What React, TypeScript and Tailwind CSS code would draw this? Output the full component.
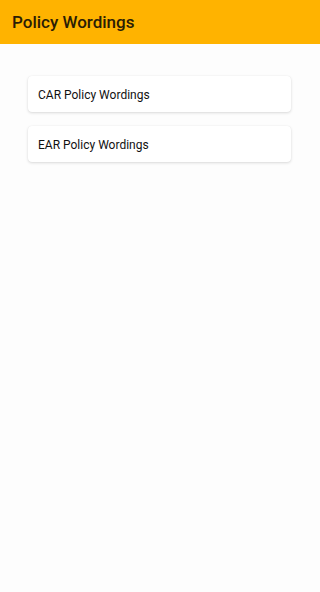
import * as React from "react";

const items = ["CAR Policy Wordings", "EAR Policy Wordings"];

export default function App() {
    return (
        <div
            className="flex flex-col h-[592px] w-[320px] bg-[#fdfdfd] overflow-hidden"
            style={{ fontFamily: "Roboto, 'Noto Sans', sans-serif" }}
        >
            {/* App bar */}
            <header className="h-[44px] shrink-0 bg-[#ffb300] px-3 flex items-center">
                <h1 className="text-[17px] font-medium text-[#2b1d05] leading-none">
                    Policy Wordings
                </h1>
            </header>

            {/* List */}
            <div className="flex flex-col gap-[14px] pt-[32px] pl-[28px] pr-[29px]">
                {items.map((label) => (
                    <div
                        key={label}
                        className="h-[36px] flex items-center px-[10px] bg-white rounded-[4px] shadow-[0_1px_3px_rgba(0,0,0,0.14),0_0_1px_rgba(0,0,0,0.08)]"
                    >
                        <span className="text-[12px] text-[#111111] pt-px">{label}</span>
                    </div>
                ))}
            </div>
        </div>
    );
}
